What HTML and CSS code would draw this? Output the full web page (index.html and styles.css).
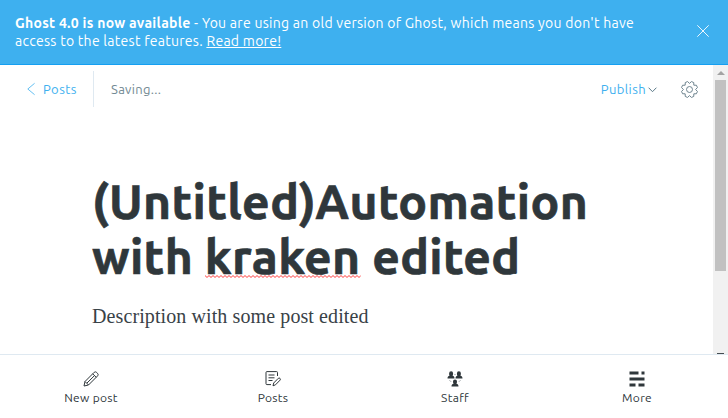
FILE: index.html
```html
<!DOCTYPE html>
<html lang="en">
<head>
<meta charset="utf-8">
<title>Ghost Editor</title>
<link rel="stylesheet" href="styles.css">
</head>
<body>
<div class="app">
  <aside class="banner">
    <p class="banner-text"><strong>Ghost 4.0 is now available</strong> - You are using an old version of Ghost, which means you don't have<br>access to the latest features. <a href="#">Read more!</a></p>
    <svg class="close" viewBox="0 0 12 12"><path d="M.3.3l11.4 11.4M11.7.3L.3 11.7"/></svg>
  </aside>
  <div class="viewport">
    <main class="editor">
      <header class="toolbar">
        <a class="back" href="#"><svg viewBox="0 0 8 12"><path d="M7.6.3L.8 6l6.8 5.7"/></svg><span>Posts</span></a>
        <span class="status">Saving...</span>
        <a class="publish" href="#"><span>Publish</span><svg viewBox="0 0 9 6"><path d="M.6.7l3.9 4 3.9-4"/></svg></a>
        <svg class="gear" viewBox="0 0 24 24"><path d="M12 3.4L14.7.8 18 2.2l.1 3.700 3.700.1 1.400 3.300L20.600 12l2.600 2.700-1.400 3.300-3.700.1-.1 3.700-3.300 1.400L12 20.600l-2.700 2.600L6 21.800l-.1-3.700L2.200 18 .8 14.700 3.400 12 .8 9.300 2.200 6l3.700-.1L6 2.200 9.300.8z"/><circle cx="12" cy="12" r="4.200"/></svg>
      </header>
      <article class="post">
        <h1>(Untitled)Automation<br>with <span class="misspelled">kraken<svg class="squiggle"><defs><pattern id="wave" width="4" height="3" patternUnits="userSpaceOnUse"><path d="M-1 1.500L0 .5l2 2 2-2 1 1"/></pattern></defs><rect width="100%" height="3" fill="url(#wave)"/></svg></span> edited</h1>
        <p class="body">Description with some post edited</p>
      </article>
    </main>
    <div class="scrollbar"><i class="arrow"></i><i class="thumb"></i><i class="mark"></i></div>
  </div>
  <nav class="tabs">
    <a href="#"><svg viewBox="0 0 16 16"><path d="M1 15l1-4.500L11.200 1.300q1.200-1 2.500.2l.8.8q1.200 1.300.2 2.500L5.500 14zM2 10.500L5.500 14M9.700 2.800l3.500 3.500M4 12l7.300-7.200"/></svg><span>New post</span></a>
    <a href="#"><svg viewBox="0 0 16 16"><path d="M12.500 5V1.500q0-.9-.9-.9H1.900q-.9 0-.9.9v11.200q0 .9.9.9H6M3.500 4h6M3.500 6.800h6M3.500 9.500h4M8 14.800l.7-2.800 4.600-4.700q.9-.7 1.700.1t.1 1.700l-4.600 4.700z"/></svg><span>Posts</span></a>
    <a href="#"><svg class="solid" viewBox="0 0 16 16"><path d="M2.100 2.500a2 2.200 0 014 0c0 1.300-.3 1.800-.6 2.300 1.200.3 2 .8 2 2.700H.5C.5 5.600 1.400 5.100 2.600 4.800c-.3-.5-.5-1-.5-2.300zM9.900 2.500a2 2.200 0 014 0c0 1.300-.3 1.800-.5 2.300 1.200.3 2.100.8 2.100 2.700h-7c0-1.900.8-2.400 2-2.700-.3-.5-.6-1-.6-2.300zM6 10.500a2 2 0 014 0c0 1.300-.3 1.800-.6 2.200 1.200.3 2.100.8 2.100 2.700h-7c0-1.900.9-2.400 2.100-2.700-.3-.4-.6-.9-.6-2.200z"/><path class="links" d="M2.300 9l2 2M13.700 9l-2 2M7.300 3.500h1.400"/></svg><span>Staff</span></a>
    <a href="#"><svg class="solid" viewBox="0 0 16 16"><path d="M.5.500h9v3h-9zM12.500.5h3v3h-3zM.5 6.500h15v3H.5zM.5 12.500h6v3h-6zM9.500 12.500h6v3h-6z"/></svg><span>More</span></a>
  </nav>
</div>
</body>
</html>
```
FILE: styles.css
```css
* { box-sizing: border-box; }
body { margin: 0; background: #fff; color: #2f373b; font-family: Ubuntu, "Noto Sans", sans-serif; letter-spacing: .3px; overflow: hidden; }
a { color: inherit; text-decoration: none; }
svg { display: block; fill: none; stroke: currentColor; overflow: visible; }
.app { height: 418px; display: flex; flex-direction: column; }
.banner { height: 65px; flex: none; display: flex; justify-content: space-between; padding: 14px 19px 0 15px; background: #3eb0ef; border-bottom: 1px solid #159ff1; color: #fff; }
.banner-text { margin: 0; font-size: 14px; line-height: 18px; letter-spacing: .275px; white-space: nowrap; }
.banner-text a { text-decoration: underline; }
.close { width: 12px; height: 12px; margin-top: 11px; stroke-width: .9; }
.viewport { flex: 1; display: flex; min-height: 0; }
.editor { flex: 1; min-width: 0; }
.toolbar { height: 49px; padding: 0 15px 1px 27px; display: flex; align-items: center; font-size: 13px; color: #738a94; }
.back { display: flex; align-items: center; gap: 8px; width: 67px; height: 36px; border-right: 1px solid #dfe9f1; color: #3eb0ef; letter-spacing: .45px; }
.back svg { width: 8px; height: 12px; stroke-width: .8; }
.status { margin-left: 17px; }
.publish { display: flex; align-items: center; gap: 2px; margin-left: auto; color: #3eb0ef; letter-spacing: .4px; }
.publish svg { width: 9px; height: 6px; margin-top: 2px; color: #5b7a89; }
.gear { width: 17px; height: 17px; margin-left: 24px; color: #6b828d; stroke-width: 1.4; stroke-linejoin: round; }
.post { padding: 60px 0 0 92px; white-space: nowrap; }
h1 { margin: 0; font-size: 48px; font-weight: 700; line-height: 55px; letter-spacing: .36px; -webkit-text-stroke: .7px #2f373b; }
.misspelled { position: relative; }
.squiggle { position: absolute; left: 0; bottom: 5px; width: 100%; height: 3px; stroke: #f33; stroke-width: 1; }
.squiggle rect { stroke: none; }
.body { margin: 18px 0 0; font: 20px/28px "Liberation Serif", serif; letter-spacing: .1px; color: #394247; }
.scrollbar { position: relative; width: 15px; background: #f1f1f1; display: flex; flex-direction: column; align-items: center; padding-top: 6px; }
.arrow { border: 4px solid transparent; border-top: 0; border-bottom: 4px solid #a3a3a3; }
.thumb { width: 11px; height: 191px; margin-top: 5px; background: #c1c1c1; }
.mark { position: absolute; left: 4px; bottom: 0; width: 7px; height: 1px; background: #454d51; }
.tabs { height: 64px; flex: none; display: grid; grid-template-columns: repeat(4, 1fr); border-top: 1px solid #dfe9f1; }
.tabs a { display: flex; flex-direction: column; align-items: center; padding-top: 15.5px; font-size: 12px; line-height: 18px; }
.tabs svg { width: 16px; height: 16px; margin-bottom: 2.5px; stroke-width: 1; }
.tabs .solid { fill: currentColor; stroke: none; }
.tabs .links { fill: none; stroke: #9aa2a6; stroke-width: .8; }
```
